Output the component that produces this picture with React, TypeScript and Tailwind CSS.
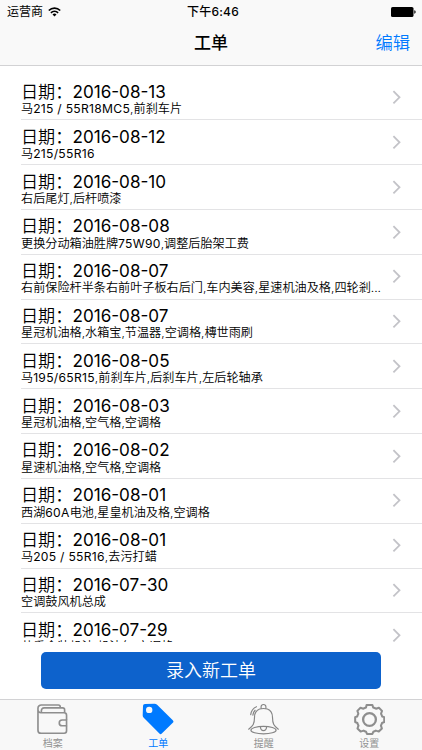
import React from 'react';

type Order = { date: string; note: string };

const orders: Order[] = [
  { date: '2016-08-13', note: '马215 / 55R18MC5,前刹车片' },
  { date: '2016-08-12', note: '马215/55R16' },
  { date: '2016-08-10', note: '右后尾灯,后杆喷漆' },
  { date: '2016-08-08', note: '更换分动箱油胜牌75W90,调整后胎架工费' },
  { date: '2016-08-07', note: '右前保险杆半条右前叶子板右后门,车内美容,星速机油及格,四轮剎...' },
  { date: '2016-08-07', note: '星冠机油格,水箱宝,节温器,空调格,槫世雨刷' },
  { date: '2016-08-05', note: '马195/65R15,前刹车片,后刹车片,左后轮轴承' },
  { date: '2016-08-03', note: '星冠机油格,空气格,空调格' },
  { date: '2016-08-02', note: '星速机油格,空气格,空调格' },
  { date: '2016-08-01', note: '西湖60A电池,星皇机油及格,空调格' },
  { date: '2016-08-01', note: '马205 / 55R16,去污打蜡' },
  { date: '2016-07-30', note: '空调鼓风机总成' },
  { date: '2016-07-29', note: '共重金装机油,机油包,空调格' },
];

function StatusBar() {
  return (
    <div className="grid h-[21px] grid-cols-3 items-center pt-[2px] text-[12px] leading-none">
      <div className="flex items-center gap-[5px] pl-[7px]">
        <span>运营商</span>
        <svg width="13" height="10" viewBox="0 0 13 10" fill="none" stroke="#000" strokeWidth="1.7">
          <path d="M.8 3.5a8.2 8.2 0 0 1 11.4 0M2.900 5.800a5.200 5.200 0 0 1 7.200 0" />
          <path d="M6.500 9.600 4.500 7.500a2.900 2.900 0 0 1 4 0z" fill="#000" stroke="none" />
        </svg>
      </div>
      <span className="pl-[4px] text-center font-medium tracking-[0.2px]">下午6:46</span>
      <div className="flex justify-end pr-[6px]">
        <svg width="25" height="10" viewBox="0 0 25 10">
          <rect width="22.5" height="10" rx="1.6" />
          <path d="M23.300 3.300c1.800.3 1.800 3.100 0 3.400z" />
        </svg>
      </div>
    </div>
  );
}

/* Part numbers are set slightly looser than the Chinese text round them. */
function Note({ text }: { text: string }) {
  return (
    <>
      {text.split(/([0-9A-Z/ ]+)/).map((part, i) =>
        i % 2 ? (
          <span key={i} className="font-normal tracking-[0.28px]">
            {part}
          </span>
        ) : (
          part
        ),
      )}
    </>
  );
}

function Row({ date, note }: Order) {
  return (
    <li className="ml-[21px] flex h-[44.82px] shrink-0 border-b border-[#e3e3e5]">
      <div className="w-[364px] pt-[6.3px]">
        <div className="flex h-[19px] whitespace-nowrap text-[17.1px] leading-[19px]">
          <span className="w-[51.5px] font-[350]">日期：</span>
          <span>{date}</span>
        </div>
        <div className="whitespace-nowrap pt-[0.3px] text-[12.13px] font-[350] leading-[16px]">
          <Note text={note} />
        </div>
      </div>
      <svg className="mt-[14.5px] ml-[7px]" width="10" height="15" viewBox="0 0 10 15" fill="none" stroke="#c3c3c8" strokeWidth="1.8">
        <path d="m1.400 1.200 6.100 6.100-6.100 6.100" />
      </svg>
    </li>
  );
}

function Wallet() {
  return (
    <svg width="31" height="32" viewBox="0 0 32 32" fill="none" stroke="#8e8e8e" strokeWidth="1.7" strokeLinejoin="round">
      <path d="M30.500 17V12a2.500 2.500 0 0 0-2.500-2.500H4A3 3 0 0 1 1 6.500V5a3.500 3.500 0 0 1 3.500-3.500H22a2 2 0 0 1 2 2v1M1 6v21.500A3.200 3.200 0 0 0 4.200 30.700H28a2.500 2.500 0 0 0 2.500-2.500V23" />
      <path d="M4.500 9V7.500c0-1.700 1-3 2.800-3H26.500a2 2 0 0 1 2 2v3M30.500 17H26a3 3 0 0 0 0 6h4.500z" />
    </svg>
  );
}

function Tag() {
  return (
    <svg width="32" height="32" viewBox="0 0 32 32" fill="#007aff">
      <path fillRule="evenodd" d="M3 1 12.500.7q1.500 0 2.600 1L30.800 17.200q1.300 1.300 0 2.600l-11 10.800q-1.200 1.100-2.400 0L1.500 14.500Q.6 13.600.7 12.300L1 3Q1 1 3 1M7.200 3.700a3.200 3.200 0 1 0 0 6.400 3.200 3.200 0 0 0 0-6.400" />
    </svg>
  );
}

function Bell() {
  return (
    <svg width="31" height="32" viewBox="0 0 32 32" fill="none" stroke="#858585" strokeWidth="1.2" strokeLinecap="round">
      <path d="M13.500 5.500V3.300A2.500 2.500 0 0 1 16 1a2.500 2.500 0 0 1 2.500 2.300V5.500M12 5.700q4-1 8 0M12 5.700C8.500 7 6.700 10 6.700 14.500c0 6.500-1.500 8.500-6 12M20 5.700c3.500 1.300 5.300 4.300 5.300 8.800 0 6.500 1.500 8.500 6 12M2.800 11.500c.4-3.500 2.400-6.500 5.900-8.200M5 12c.3-2 1-3.700 2.300-5" />
      <ellipse cx="16" cy="27.500" rx="13" ry="3.900" />
      <path d="M12.800 24c.2 3 1.300 4 3.200 4s3-1 3.200-4" />
    </svg>
  );
}

function Gear() {
  return (
    <svg width="31" height="32" viewBox="0 0 32 32" fill="none" stroke="#8e8e8e" strokeWidth="2.100" strokeLinejoin="round">
      <path d="M13 1.500h6l.8 2.700q1.500.4 2.900 1.200l3-1 3.200 3.200-1 3q.8 1.400 1.200 2.800l2.100.7v5l-2.300 1q-.4 1.400-1.100 2.700l1 3-3.200 3.200-3-1q-1.300.8-2.700 1.200l-.9 2.200h-5.600l-.9-2.200q-1.400-.4-2.700-1.200l-3 1-3.200-3.200 1-3q-.7-1.300-1.100-2.700l-2.300-1v-5l2.100-.7q.4-1.400 1.200-2.800l-1-3 3.200-3.200 3 1q1.400-.8 2.700-1.200z" />
      <circle cx="16" cy="16.500" r="6.600" strokeWidth="2.400" />
    </svg>
  );
}

const tabs = [
  { label: '档案', icon: <Wallet />, active: false },
  { label: '工单', icon: <Tag />, active: true },
  { label: '提醒', icon: <Bell />, active: false },
  { label: '设置', icon: <Gear />, active: false },
];

export default function App() {
  return (
    <div className="flex h-[750px] w-[422px] flex-col overflow-hidden bg-white font-[Inter,'Noto_Sans_CJK_SC',sans-serif] text-black">
      <header className="h-[66px] shrink-0 border-b border-[#d2d2d4] bg-[#f9f9f9]">
        <StatusBar />
        <div className="grid h-[44px] grid-cols-3 items-center text-[17px] leading-none">
          <span className="col-start-2 text-center font-medium">工单</span>
          <span className="pr-[12px] text-right text-[17.3px] font-[350] text-[#007aff]">编辑</span>
        </div>
      </header>
      <main className="flex min-h-0 flex-1 flex-col">
        <ul className="flex h-[576px] shrink-0 flex-col overflow-hidden pt-[9.6px]">
          {orders.map((order, i) => (
            <Row key={i} {...order} />
          ))}
        </ul>
        <button className="mx-[41px] mt-[10px] h-[37px] rounded-[5px] bg-[#0d62cc] text-[18px] font-[350] leading-none text-white">
          录入新工单
        </button>
      </main>
      <nav className="grid h-[51px] shrink-0 grid-cols-4 border-t border-[#d2d2d4] bg-[#f8f8f8]">
        {tabs.map((tab) => (
          <div key={tab.label} className={`flex flex-col items-center pt-[3px] ${tab.active ? 'text-[#007aff]' : 'text-[#929292]'}`}>
            {tab.icon}
            <span className="mt-[2px] text-[10px] leading-[12px]">{tab.label}</span>
          </div>
        ))}
      </nav>
    </div>
  );
}
